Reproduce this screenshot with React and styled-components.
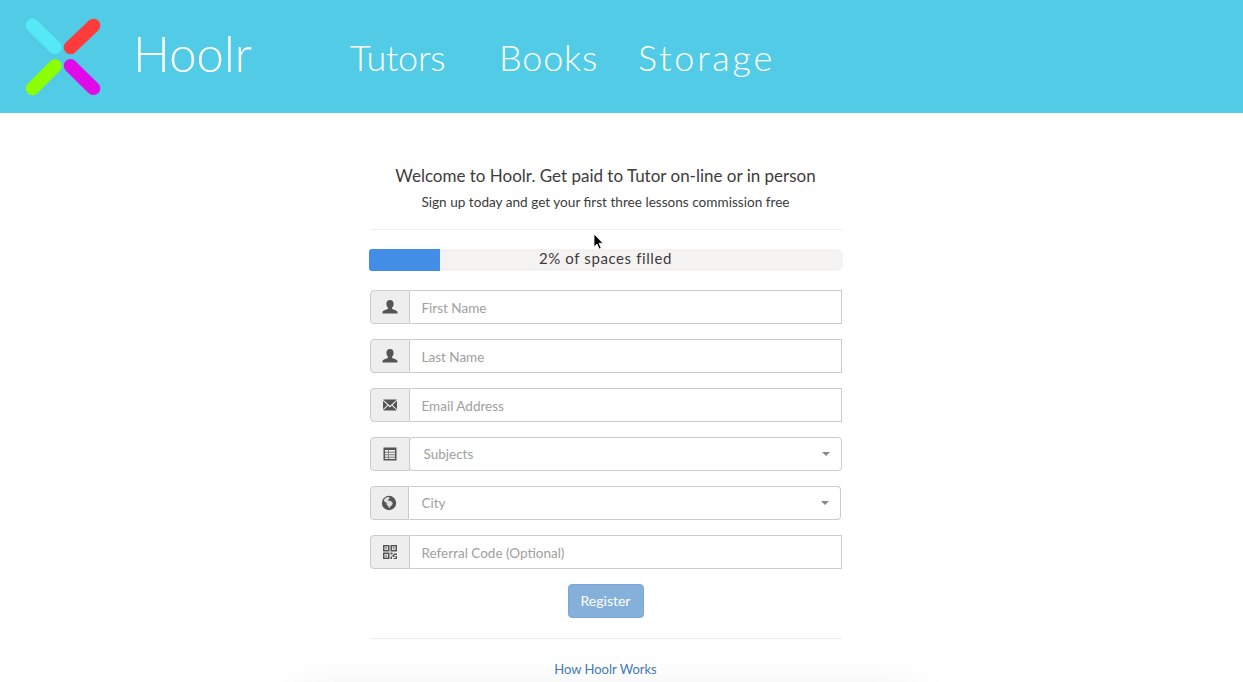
import React from 'react'
import styled, { createGlobalStyle } from 'styled-components'

const GlobalStyle = createGlobalStyle`
  html, body {
    margin: 0;
    height: 682px;
    overflow: hidden;
    background: #fff;
  }
  body {
    font-family: "Lato", "Open Sans", sans-serif;
    color: #333;
  }
  * { box-sizing: border-box; }
`

const fields = [
  { icon: 'user', placeholder: 'First Name' },
  { icon: 'user', placeholder: 'Last Name' },
  { icon: 'mail', placeholder: 'Email Address' },
  { icon: 'list', placeholder: 'Subjects', select: true },
  { icon: 'globe', placeholder: 'City', select: true, narrow: true },
  { icon: 'qr', placeholder: 'Referral Code (Optional)' },
]

function Logo() {
  return (
    <LogoSvg viewBox="0 0 76 78" width="76" height="78">
      <g strokeWidth="13.500" strokeLinecap="round">
        <line x1="7.500" y1="7.300" x2="30" y2="29.300" stroke="#55e8f5" />
        <line x1="68.500" y1="7.500" x2="45.500" y2="29.500" stroke="#ff3b3b" />
        <line x1="7.500" y1="70.500" x2="30" y2="48" stroke="#8cff00" />
        <line x1="45.500" y1="47.800" x2="68.500" y2="70.300" stroke="#e00be8" />
      </g>
    </LogoSvg>
  )
}

function FieldIcon({ name }) {
  if (name === 'user') {
    return (
      <svg width="16" height="16" viewBox="0 0 16 16" fill="#555">
        <path d="M8 1c2.300 0 3.600 1.700 3.600 3.900 0 1.500-.6 2.900-1.500 3.700v1.200c0 .6 4.900 1.400 5.400 3.200v1.500H.5V13c.5-1.800 5.400-2.600 5.400-3.200V8.600C5 7.800 4.400 6.400 4.400 4.900 4.400 2.700 5.700 1 8 1z" />
      </svg>
    )
  }
  if (name === 'mail') {
    return (
      <svg width="16" height="16" viewBox="0 0 16 16" fill="#555">
        <path d="M1 2.500h14L8 8.800z" />
        <path d="M1 3.800v8.400L5.400 8zM15 3.800v8.400L10.600 8zM6.200 8.800 8 10.400l1.800-1.600 5.200 4.700H1z" />
      </svg>
    )
  }
  if (name === 'list') {
    return (
      <svg width="16" height="16" viewBox="0 0 16 16">
        <path fillRule="evenodd" d="M1.500 1.500h13v13h-13zM3 4v9h10V4z" fill="#555" />
        <path d="M3 5.800h10v1H3zM3 8.300h10v1H3zM3 10.800h10v1H3z" fill="#777" />
        <path d="M6 4h1v9H6z" fill="#888" />
      </svg>
    )
  }
  if (name === 'globe') {
    return (
      <svg width="16" height="16" viewBox="0 0 16 16">
        <circle cx="8" cy="8" r="7.200" fill="#555" />
        <path d="M4.800 2.600 8 1.900l.8 1.300-1.600 1.400.4 1.300 1.900-.2 2.300 2.200-.7 2-2 1.800-.9 1.800-1-2.600-1.600-1.200V7.600L4 7.200 2.700 5.300z" fill="#eee" opacity="0.9" />
      </svg>
    )
  }
  return (
    <svg width="16" height="16" viewBox="0 0 16 16" fill="#555">
      <path fillRule="evenodd" d="M1 1h6.500v6.500H1zM2.500 2.500V6H6V2.500zM8.500 1H15v6.500H8.500zM10 2.500V6h3.500V2.500zM1 8.500h6.500V15H1zM2.500 10v3.500H6V10z" />
      <path d="M3.300 3.300h1.900v1.900H3.300zM10.800 3.300h1.900v1.900h-1.900zM3.300 10.800h1.900v1.900H3.300z" opacity="0.6" />
      <path d="M8.500 8.500h2v2h-2zM11.500 9.500H15V11h-3.500zM10.500 11h2v2h-2zM8.500 12.500H10V15H8.500zM13.500 12H15v3h-3.500v-1h2z" />
    </svg>
  )
}

export default function App() {
  return (
    <>
      <GlobalStyle />
      <Header>
        <Logo />
        <Brand>Hoolr</Brand>
        <Nav>
          <NavLink $width={149} $spacing={-0.2}>Tutors</NavLink>
          <NavLink $width={139} $spacing={0.8}>Books</NavLink>
          <NavLink $spacing={2.8}>Storage</NavLink>
        </Nav>
      </Header>
      <Main>
        <Title>Welcome to Hoolr. Get paid to Tutor on-line or in person</Title>
        <Subtitle>Sign up today and get your first three lessons commission free</Subtitle>
        <Rule />
        <Progress>
          <ProgressFill />
          <ProgressLabel>2% of spaces filled</ProgressLabel>
        </Progress>
        <Form>
          {fields.map((f) => (
            <Field key={f.placeholder}>
              <Addon $narrow={f.narrow}>
                <FieldIcon name={f.icon} />
              </Addon>
              {f.select ? (
                <SelectBox $narrow={f.narrow}>{f.placeholder}</SelectBox>
              ) : (
                <Input placeholder={f.placeholder} />
              )}
            </Field>
          ))}
        </Form>
        <RegisterButton>Register</RegisterButton>
        <BottomRule />
        <HowLink href="#">How Hoolr Works</HowLink>
        <FooterGlow />
      </Main>
      <Cursor width="12" height="18" viewBox="0 0 12 18">
        <path d="M1 1v13l3-3 2.200 5 2-.9L6 10.300h4z" fill="#000" stroke="#fff" strokeWidth="0.800" />
      </Cursor>
    </>
  )
}

const Header = styled.header`
  height: 113px;
  background: #52cce6;
  display: flex;
  align-items: flex-start;
  padding: 18px 0 0 25px;
  color: #fff;
  font-weight: 300;
`

const LogoSvg = styled.svg`
  flex: none;
`

const Brand = styled.div`
  font-size: 49px;
  line-height: 70px;
  margin-left: 32px;
  width: 217px;
`

const Nav = styled.nav`
  display: flex;
  padding-top: 16px;
`

const NavLink = styled.a`
  display: block;
  font-size: 36px;
  line-height: 46px;
  letter-spacing: ${(p) => p.$spacing}px;
  width: ${(p) => (p.$width ? `${p.$width}px` : 'auto')};
`

const Main = styled.main`
  position: relative;
  width: 474px;
  margin: 0 auto;
  transform: translateX(-16px);
  padding-top: 51px;
  display: flex;
  flex-direction: column;
  align-items: center;
`

const Title = styled.h1`
  margin: 0;
  font-size: 17px;
  line-height: 24px;
  font-weight: 400;
  color: #3c3c3c;
`

const Subtitle = styled.p`
  margin: 4px 0 0;
  font-size: 13.600px;
  line-height: 20px;
  color: #3c3c3c;
`

const Rule = styled.hr`
  align-self: stretch;
  margin: 17px 1px 0;
  border: 0;
  border-top: 1px solid #eee;
`

const Progress = styled.div`
  position: relative;
  align-self: stretch;
  height: 22px;
  margin-top: 19px;
  padding-bottom: 4px;
  background: #f5f2f2;
  border-radius: 6px;
  display: flex;
  align-items: center;
  justify-content: center;
`

const ProgressFill = styled.div`
  position: absolute;
  left: 0;
  top: 0;
  bottom: 0;
  width: 71px;
  background: #428ee6;
  border-radius: 3px 0 0 3px;
`

const ProgressLabel = styled.span`
  font-size: 15px;
  color: #3c3c3c;
  letter-spacing: 0.6px;
`

const Form = styled.div`
  align-self: stretch;
  margin: 19px 1px 0;
  display: flex;
  flex-direction: column;
  gap: 15px;
`

const Field = styled.div`
  display: flex;
  height: 34px;
`

const Addon = styled.div`
  flex: none;
  width: ${(p) => (p.$narrow ? 39 : 40)}px;
  background: #eee;
  border: 1px solid #ccc;
  border-radius: 4px 0 0 4px;
  display: flex;
  align-items: center;
  justify-content: center;
`

const Input = styled.input`
  flex: 1;
  min-width: 0;
  border: 1px solid #ccc;
  border-left: 0;
  padding: 2px 12px 0;
  font: 13.500px "Lato", sans-serif;
  color: #555;
  outline: 0;
  background: #fff;

  &::placeholder {
    color: #a0a0a0;
    opacity: 1;
  }
`

const SelectBox = styled.div`
  position: relative;
  flex: 1;
  margin-right: ${(p) => (p.$narrow ? 1 : 0)}px;
  margin-left: ${(p) => (p.$narrow ? 0 : -1)}px;
  border: 1px solid #ccc;
  border-left-color: ${(p) => (p.$narrow ? 'transparent' : '#ccc')};
  border-radius: ${(p) => (p.$narrow ? '0 4px 4px 0' : '4px')};
  padding-left: ${(p) => (p.$narrow ? 12 : 14)}px;
  font-size: 13.500px;
  line-height: 32px;
  color: #a0a0a0;
  background: #fff;

  &::after {
    content: '';
    position: absolute;
    right: 11px;
    top: 14px;
    border-style: solid;
    border-width: 4px 4px 0;
    border-color: #888 transparent transparent;
  }
`

const RegisterButton = styled.button`
  width: 76px;
  height: 34px;
  margin-top: 15px;
  padding: 0 0 2px;
  border: 1px solid #7ba9d4;
  border-radius: 4px;
  background: #85b0da;
  color: #fff;
  font: 14px "Lato", sans-serif;
`

const BottomRule = styled(Rule)`
  margin-top: 20px;
`

const HowLink = styled.a`
  margin-top: 20px;
  font-size: 13px;
  line-height: 20px;
  color: #3f7cb8;
  text-decoration: none;
`

const FooterGlow = styled.div`
  flex: none;
  width: 620px;
  height: 40px;
  margin-top: 17px;
  box-shadow: 0 0 50px rgba(0, 0, 0, 0.09);
`

const Cursor = styled.svg`
  position: absolute;
  left: 593px;
  top: 233px;
`
